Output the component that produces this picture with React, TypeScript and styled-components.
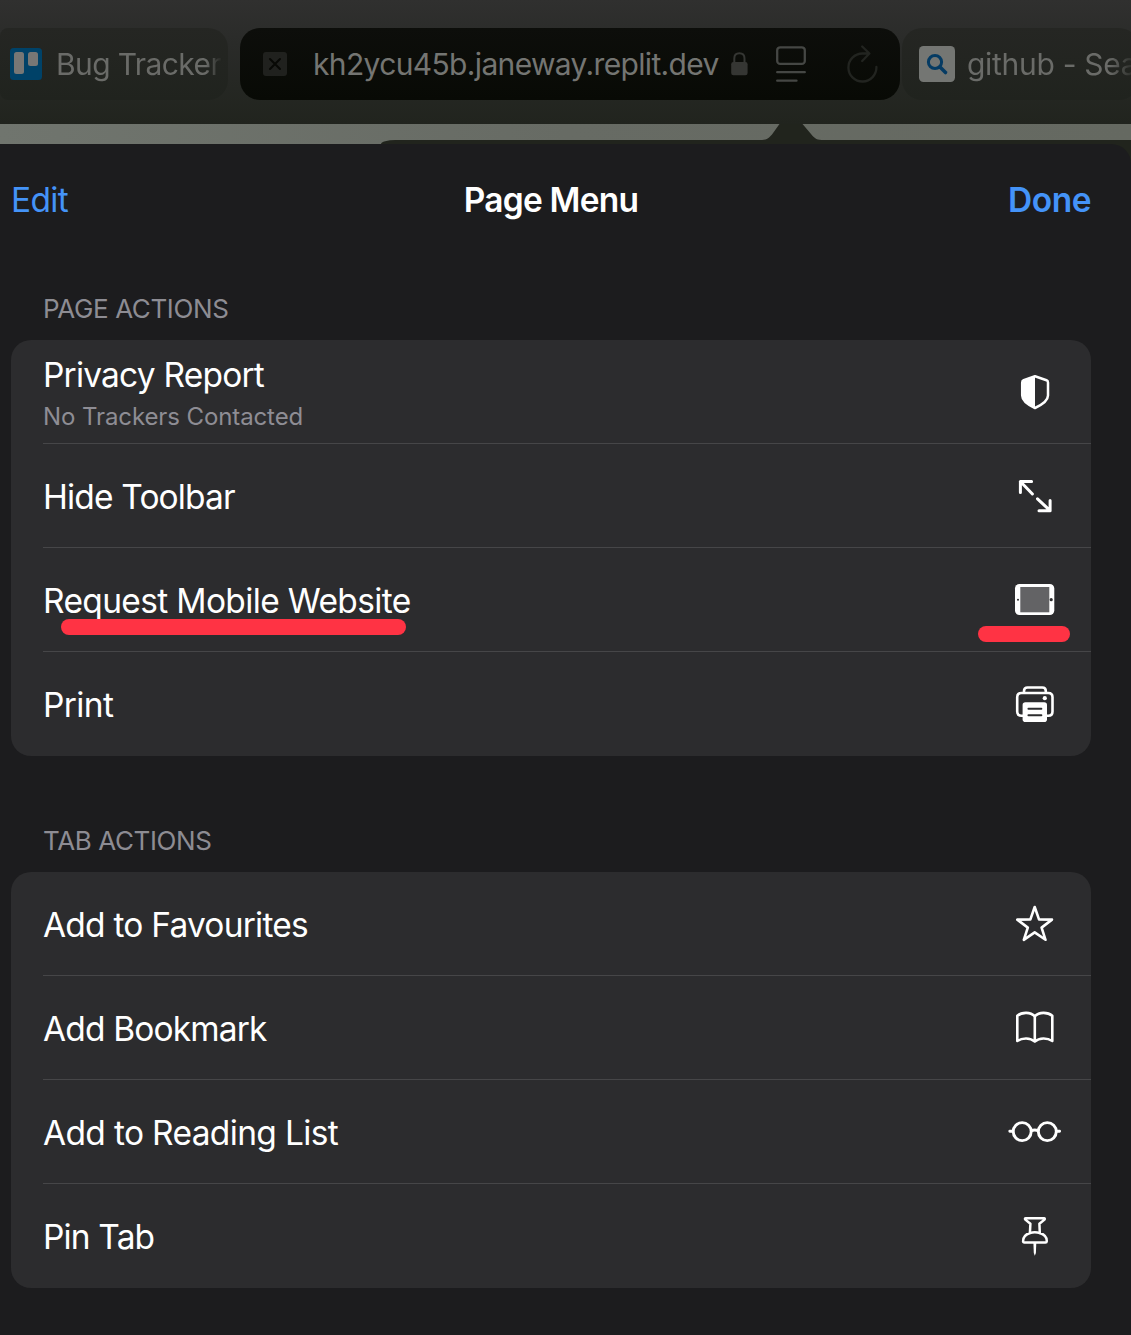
import React from 'react';
import styled, { createGlobalStyle } from 'styled-components';

const GlobalStyle = createGlobalStyle`
  *, *::before, *::after { box-sizing: border-box; }
  body {
    margin: 0;
    background: #1c1c1e;
    font-family: Inter, 'Liberation Sans', sans-serif;
    overflow: hidden;
  }
`;

const Screen = styled.div`
  display: flex;
  flex-direction: column;
  width: 1131px;
  height: 1335px;
  overflow: hidden;
  background: #21241d;
`;

const TabBar = styled.div`
  display: flex;
  flex: none;
  height: 124px;
  padding-top: 28px;
  background: linear-gradient(180deg, #30302f 0%, #2a2b29 35%, #21241e 100%);
`;

const Tab = styled.div<{ $width: number; $gap: number; $pad: number; $side: 'left' | 'right' }>`
  display: flex;
  flex: none;
  align-items: center;
  width: ${(p) => p.$width}px;
  height: 72px;
  margin-right: ${(p) => p.$gap}px;
  padding-left: ${(p) => p.$pad}px;
  border-radius: ${(p) => (p.$side === 'left' ? '8px 20px 20px 8px' : '20px')};
  background: linear-gradient(180deg, #252623, #20231e);
`;

const ActiveTab = styled.div`
  display: flex;
  flex: none;
  align-items: center;
  width: 660px;
  height: 72px;
  margin-right: 2px;
  padding-left: 23px;
  border-radius: 20px;
  background: linear-gradient(180deg, #0d0e0b, #080a05);
`;

const TabTitle = styled.span<{ $width: number; $left: number; $track: number; $fade: number }>`
  flex: none;
  width: ${(p) => p.$width}px;
  margin-left: ${(p) => p.$left}px;
  overflow: hidden;
  color: #6a6b68;
  font-size: 30px;
  line-height: 44px;
  letter-spacing: ${(p) => p.$track}px;
  white-space: nowrap;
  mask-image: linear-gradient(90deg, #000 calc(100% - ${(p) => p.$fade}px), transparent);
`;

const Address = styled.span`
  flex: none;
  width: 406px;
  margin-left: 26px;
  color: #747572;
  font-size: 30px;
  line-height: 44px;
  letter-spacing: -0.65px;
  white-space: nowrap;
`;

const Glyph = styled.svg<{ $left?: number }>`
  display: block;
  flex: none;
  margin-left: ${(p) => p.$left ?? 0}px;
`;

const PageStrip = styled.div`
  position: relative;
  flex: none;
  height: 20px;
  padding: 16px 0 0 381px;
  background: linear-gradient(90deg, #70756e, #676b64 50%, #656961);
`;

const PopoverEdge = styled.div`
  height: 4px;
  border-radius: 18px 0 0 0 / 5px 0 0 0;
  background: #21241d;
`;

const PopoverArrow = styled.svg`
  position: absolute;
  left: 760px;
  top: 0;
`;

const Sheet = styled.main`
  flex: 1;
  padding: 0 40px 0 11px;
  border-top-right-radius: 20px;
  background: #1c1c1e;
`;

const SheetHeader = styled.header`
  display: grid;
  grid-template-columns: 1fr auto 1fr;
  align-items: center;
  height: 112px;
  margin-bottom: 22px;
`;

const HeaderButton = styled.button<{ $strong?: boolean; $track: number }>`
  justify-self: ${(p) => (p.$strong ? 'end' : 'start')};
  padding: 0;
  border: 0;
  background: none;
  color: #4493f8;
  font: ${(p) => (p.$strong ? 600 : 400)} 33.5px/44px Inter, sans-serif;
  letter-spacing: ${(p) => p.$track}px;
`;

const Title = styled.h1`
  margin: 0;
  color: #fff;
  font-size: 33.5px;
  font-weight: 600;
  line-height: 44px;
  letter-spacing: -0.8px;
`;

const Section = styled.section`
  margin-bottom: 54px;
`;

const SectionLabel = styled.h2`
  margin: 0;
  padding-left: 32px;
  color: #8d8c93;
  font-size: 26px;
  font-weight: 400;
  line-height: 62px;
  letter-spacing: -0.38px;
`;

const Card = styled.div`
  height: 416px;
  padding-left: 32px;
  border-radius: 20px;
  background: #2c2c2e;
`;

const Row = styled.div`
  position: relative;
  display: flex;
  align-items: center;
  justify-content: space-between;
  height: 104px;
  padding-right: 28px;
  border-bottom: 1px solid #464648;
  &:last-child { border-bottom-color: transparent; }
`;

const RowText = styled.div<{ $stacked: boolean }>`
  display: flex;
  flex-direction: column;
  padding-top: ${(p) => (p.$stacked ? 8 : 3)}px;
`;

const RowLabel = styled.span<{ $track: number }>`
  color: #fff;
  font-size: 33.5px;
  line-height: 42px;
  letter-spacing: ${(p) => p.$track}px;
  white-space: nowrap;
`;

const RowDetail = styled.span`
  color: #8e8d94;
  font-size: 24px;
  line-height: 41px;
  letter-spacing: -0.1px;
  white-space: nowrap;
`;

const Marker = styled.i<{ $left: number; $top: number; $width: number }>`
  position: absolute;
  left: ${(p) => p.$left}px;
  top: ${(p) => p.$top}px;
  width: ${(p) => p.$width}px;
  height: 16.5px;
  border-radius: 8px;
  background: #ff3344;
`;

function Icon({ children, w = 2.8 }: { children: React.ReactNode; w?: number }) {
  return (
    <Glyph width="56" height="56" viewBox="0 0 56 56" fill="none" stroke="#fff" strokeWidth={w} strokeLinecap="round" strokeLinejoin="round">
      {children}
    </Glyph>
  );
}

const ShieldIcon = () => (
  <Icon w={2.5}>
    <path d="M28 12.3 39.5 16.2Q41 16.8 41 18.4V31.5C41 37 34.5 41 28 44C21.5 41 15.2 37 15.2 31.5V18.4Q15.2 16.8 16.7 16.2Z" />
    <path d="M28 12.3V44C21.5 41 15.2 37 15.2 31.5V18.4Q15.2 16.8 16.7 16.2Z" fill="#fff" stroke="none" />
  </Icon>
);
const ExpandIcon = () => (
  <Icon w={3}>
    <path d="M13.4 24.6V13.5H24.6M13.4 13.5 25.4 26M43.1 32.4V42.7H32M43.1 42.7 30.5 30.8" />
  </Icon>
);
const TabletIcon = () => (
  <Icon>
    <rect x="8" y="12" width="39.3" height="31" rx="4.5" fill="#fff" stroke="none" />
    <rect x="13.3" y="15" width="29" height="25.3" fill="#636365" stroke="none" />
    <circle cx="11" cy="27.7" r="1" fill="#2c2c2e" stroke="none" />
    <circle cx="44.2" cy="27.7" r="1.6" fill="#2c2c2e" stroke="none" />
  </Icon>
);
const PrinterIcon = () => (
  <Icon w={2.6}>
    <path d="M17 16V15Q17 11.5 20.5 11.5H35.3Q38.8 11.5 38.8 15V16" />
    <path d="M16 39.7H14.4Q10.2 39.7 10.2 35.5V21.2Q10.2 17 14.4 17H41.3Q45.5 17 45.5 21.2V35.5Q45.5 39.7 41.3 39.7H39.5" />
    <rect x="15.6" y="26.2" width="24.4" height="19.8" rx="2.8" fill="#fff" stroke="none" />
    <circle cx="37.8" cy="22.2" r="2.1" fill="#fff" stroke="none" />
    <path d="M21.4 32.7H34.4M21.4 39.3H34.4" stroke="#2c2c2e" strokeWidth="1.9" />
  </Icon>
);
const StarIcon = () => (
  <Icon w={2.6}>
    <path d="M27.7 11 32 23.4 45 23.6 34.6 31.6 38.5 43.8 27.7 36.4 16.8 43.8 20.8 31.6 10.3 23.6 23.4 23.4Z" />
  </Icon>
);
const BookIcon = () => (
  <Icon w={2.6}>
    <path d="M27.8 16.2C23.5 11.8 15 11.8 10.3 15.8V41C15.5 37.6 23.2 37.6 27.8 41.5C32.4 37.6 40.1 37.6 45.3 41V15.8C40.6 11.8 32.1 11.8 27.8 16.2Z" />
    <path d="M27.8 16.2V41" />
  </Icon>
);
const GlassesIcon = () => (
  <Icon w={2.9}>
    <circle cx="15.2" cy="27.6" r="9" />
    <circle cx="40.3" cy="27.6" r="9" />
    <path d="M2.8 27.2H5.8M24.4 26.6Q27.7 25.3 31.1 26.6M49.6 27.2H52.6" />
  </Icon>
);
const PinIcon = () => (
  <Icon w={2.5}>
    <path d="M18.8 10.2H37Q38.3 10.3 37.5 11.6L32.4 15.8 32.8 25C37.2 26.4 40 29.6 39.8 33.2Q39.7 34.6 38.4 34.6H17.4Q16 34.6 16.1 33.2C16 29.6 18.6 26.4 22.9 25L23.4 15.8 18.3 11.6Q17.4 10.3 18.8 10.2Z" />
    <path d="M22.9 25Q27.8 23.6 32.8 25" />
    <path d="M26.4 35H29.3L28.9 45 27.8 47.8 26.8 45Z" fill="#fff" stroke="none" />
  </Icon>
);

type Item = { label: string; track: number; detail?: string; icon: React.ReactNode; marked?: boolean };

const pageActions: Item[] = [
  { label: 'Privacy Report', track: -0.8, detail: 'No Trackers Contacted', icon: <ShieldIcon /> },
  { label: 'Hide Toolbar', track: -0.85, icon: <ExpandIcon /> },
  { label: 'Request Mobile Website', track: -0.65, icon: <TabletIcon />, marked: true },
  { label: 'Print', track: -0.6, icon: <PrinterIcon /> },
];

const tabActions: Item[] = [
  { label: 'Add to Favourites', track: -0.78, icon: <StarIcon /> },
  { label: 'Add Bookmark', track: -0.85, icon: <BookIcon /> },
  { label: 'Add to Reading List', track: -0.66, icon: <GlassesIcon /> },
  { label: 'Pin Tab', track: -0.85, icon: <PinIcon /> },
];

function ActionSection({ title, items }: { title: string; items: Item[] }) {
  return (
    <Section>
      <SectionLabel>{title}</SectionLabel>
      <Card>
        {items.map((item) => (
          <Row key={item.label}>
            <RowText $stacked={Boolean(item.detail)}>
              <RowLabel $track={item.track}>{item.label}</RowLabel>
              {item.detail && <RowDetail>{item.detail}</RowDetail>}
            </RowText>
            {item.icon}
            {item.marked && (
              <>
                <Marker $left={18} $top={70.5} $width={344.5} />
                <Marker $left={935} $top={77.5} $width={92} />
              </>
            )}
          </Row>
        ))}
      </Card>
    </Section>
  );
}

export default function App() {
  return (
    <Screen>
      <GlobalStyle />
      <TabBar>
        <Tab $width={228} $gap={12} $pad={10} $side="left">
          <Glyph width="32" height="32" viewBox="0 0 32 32">
            <rect width="32" height="32" rx="3.5" fill="#004268" />
            <rect x="4" y="4" width="10" height="22" rx="2.5" fill="#777775" />
            <rect x="18" y="4" width="10" height="14" rx="2.5" fill="#777775" />
          </Glyph>
          <TabTitle $width={166} $left={14} $track={-0.6} $fade={16}>Bug Tracker</TabTitle>
        </Tab>
        <ActiveTab>
          <Glyph width="24" height="24" viewBox="0 0 24 24">
            <rect width="24" height="24" rx="3" fill="#20211e" />
            <path d="M7 7 17 17M17 7 7 17" stroke="#080905" strokeWidth="2" strokeLinecap="round" />
          </Glyph>
          <Address>kh2ycu45b.janeway.replit.dev</Address>
          <Glyph $left={12} width="17" height="24" viewBox="0 0 17 24">
            <path d="M3.3 11V6.4Q3.3 1.2 8.4 1.2T13.5 6.4V11" fill="none" stroke="#353633" strokeWidth="2" />
            <rect x="0.2" y="10" width="16.4" height="13.2" rx="2.2" fill="#353633" />
          </Glyph>
          <Glyph $left={28} width="30" height="36" viewBox="0 0 30 36" fill="none" stroke="#454744" strokeWidth="2.3" strokeLinecap="round">
            <rect x="1.2" y="1.3" width="27.6" height="16.6" rx="3" />
            <path d="M1.2 26.2H28.8M1.2 34.7H20.5" />
          </Glyph>
          <Glyph $left={41} width="32" height="38" viewBox="0 0 32 38" fill="none" stroke="#222420" strokeWidth="2.3" strokeLinecap="round" strokeLinejoin="round">
            <path d="M29.4 22A14 14 0 1 1 15.4 8.5H21.5M15.2 1.5 22.4 8.5 15.2 16" />
          </Glyph>
        </ActiveTab>
        <Tab $width={237} $gap={0} $pad={17} $side="right">
          <Glyph width="36" height="36" viewBox="0 0 36 36">
            <rect width="36" height="36" rx="4.5" fill="#747673" />
            <circle cx="16" cy="16" r="6.6" fill="none" stroke="#053b63" strokeWidth="3" />
            <path d="M21 21 26.5 26.5" stroke="#053b63" strokeWidth="3.6" strokeLinecap="round" />
          </Glyph>
          <TabTitle $width={170} $left={12} $track={-0.3} $fade={28}>github - Sea</TabTitle>
        </Tab>
      </TabBar>
      <PageStrip>
        <PopoverEdge />
        <PopoverArrow width="64" height="17" viewBox="0 0 64 17" fill="#21241d">
          <path d="M0 16.5V16C7 16 9 14 12 10.5L19.5 0H42.5L51 10C55 15 57 16 64 16V17H0Z" />
        </PopoverArrow>
      </PageStrip>
      <Sheet>
        <SheetHeader>
          <HeaderButton $track={-0.7}>Edit</HeaderButton>
          <Title>Page Menu</Title>
          <HeaderButton $strong $track={-0.5}>Done</HeaderButton>
        </SheetHeader>
        <ActionSection title="PAGE ACTIONS" items={pageActions} />
        <ActionSection title="TAB ACTIONS" items={tabActions} />
      </Sheet>
    </Screen>
  );
}
